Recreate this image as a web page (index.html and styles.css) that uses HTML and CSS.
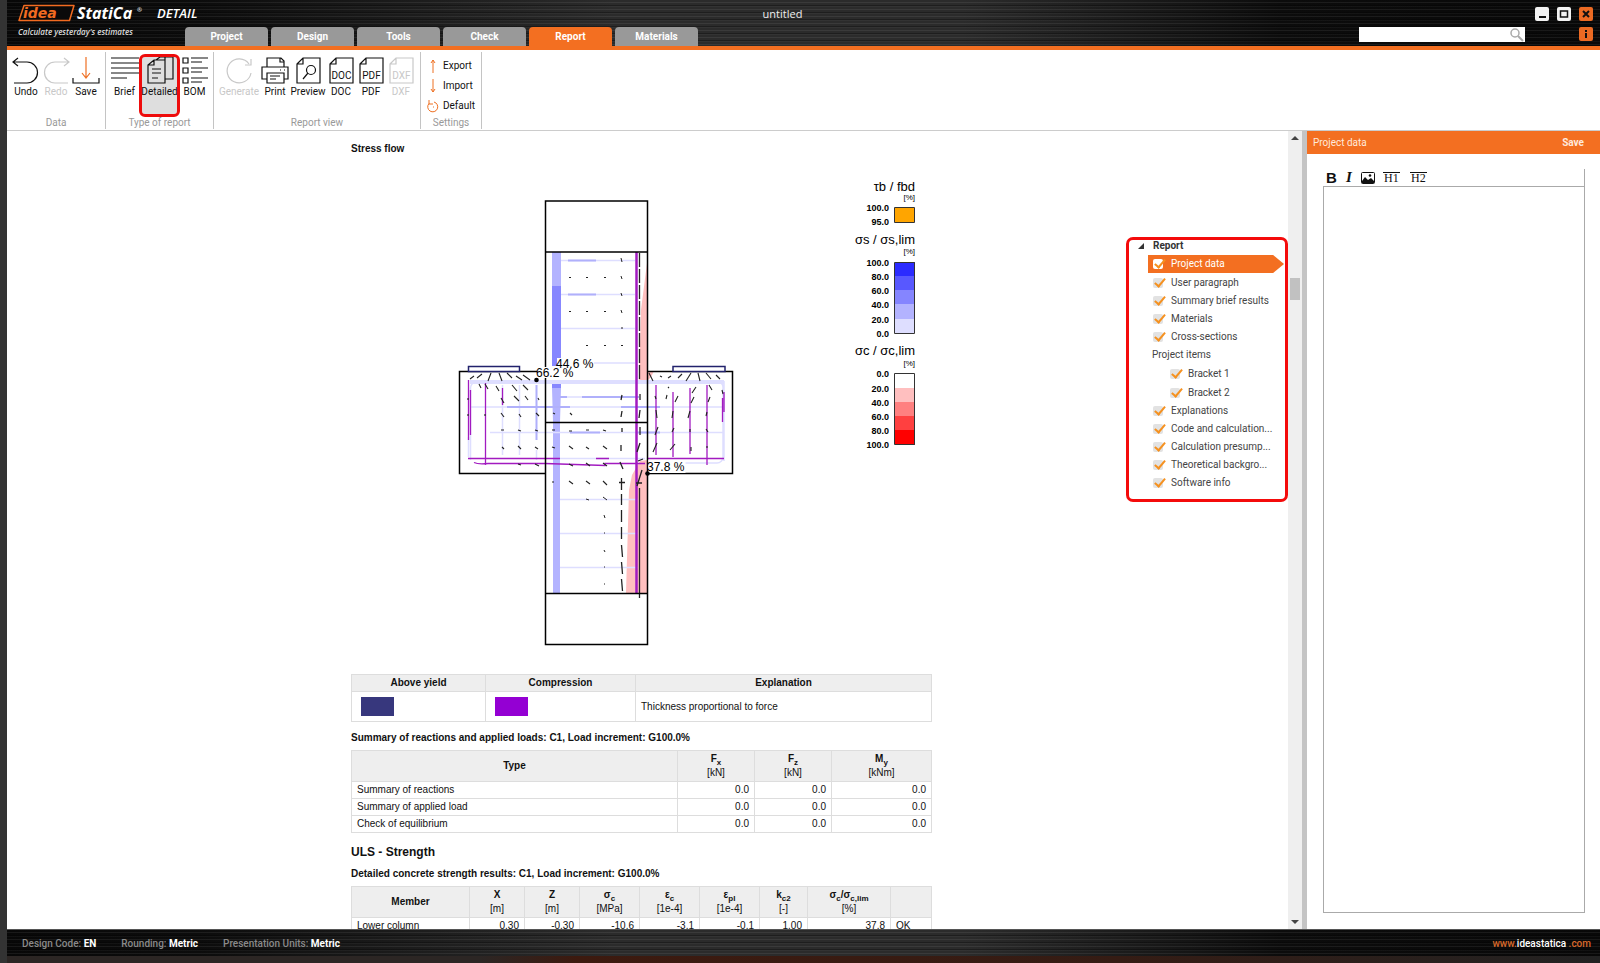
FILE: index.html
```html
<!DOCTYPE html>
<html lang="en">
<head>
<meta charset="utf-8">
<title>IDEA StatiCa Detail - untitled</title>
<link rel="stylesheet" href="styles.css">
</head>
<body>
<div class="app">
  <header class="top brushed">
    <div class="brand">
      <svg width="200" height="40" viewBox="7 0 200 40" role="img" aria-label="IDEA StatiCa DETAIL, Calculate yesterday's estimates">
        <path d="M24 5.500H74L69.500 20.500H19Z" fill="#0a0a0a" stroke="#f26b21" stroke-width="1.500" stroke-linejoin="round"/>
        <g font-style="italic" font-weight="bold">
          <text x="23" y="18" font-family="DejaVu Sans" font-size="14" fill="#f26b21">idea</text>
          <text x="77" y="19" font-family="Open Sans" font-size="16" fill="#fff">StatiCa</text>
          <text x="137" y="12" font-family="Open Sans" font-size="6" fill="#ddd">®</text>
          <text x="157" y="18" font-family="Open Sans" font-size="13" font-weight="600" fill="#fff">DETAIL</text>
          <text x="18" y="35" font-family="Open Sans" font-size="8" font-weight="600" fill="#ddd">Calculate yesterday's estimates</text>
        </g>
      </svg>
    </div>
    <div class="top-main">
      <div class="title">untitled</div>
      <nav class="tabs">
        <a href="#project">Project</a><a href="#design">Design</a><a href="#tools">Tools</a><a href="#check">Check</a><a href="#report" class="active">Report</a><a href="#materials">Materials</a>
      </nav>
    </div>
    <div class="tools">
      <div class="tool-row">
        <button class="win" aria-label="Minimize"><svg width="14" height="14"><path d="M4 10h7" stroke="#111" stroke-width="2"/></svg></button>
        <button class="win" aria-label="Maximize"><svg width="14" height="14"><path d="M3.500 4h7v6h-7z" fill="none" stroke="#111" stroke-width="1.500"/></svg></button>
        <button class="win orange" aria-label="Close"><svg width="14" height="14"><path d="M4 4l6 6M10 4l-6 6" stroke="#111" stroke-width="2"/></svg></button>
      </div>
      <div class="tool-row">
        <div class="search"><input type="text" aria-label="Search"><svg width="16" height="15" viewBox="0 0 16 15"><circle cx="6" cy="6" r="4" fill="none" stroke="#aaa" stroke-width="1.500"/><path d="M9 9l5 5" stroke="#aaa" stroke-width="2"/></svg></div>
        <button class="win orange" aria-label="Information"><svg width="14" height="14"><path d="M7 3v2M7 6v5" stroke="#111" stroke-width="2"/></svg></button>
      </div>
    </div>
  </header>

  <div class="ribbon">
    <section class="group">
      <div class="buttons">
        <button><svg class="ico" viewBox="0 0 28 28"><path d="M6 1L1 5l5 4M1 5h14a10.500 10.500 0 0 1 0 21H2"/></svg>Undo</button>
        <button disabled><svg class="ico" viewBox="0 0 28 28"><path d="M22 1l5 4-5 4M27 5H13a10.500 10.500 0 0 0 0 21h13"/></svg>Redo</button>
        <button><svg class="ico" viewBox="0 0 28 28"><path d="M1 21v5h26v-5"/><path class="o" d="M14 0v20M10 16l4 5 4-5"/></svg>Save</button>
      </div>
      <h2>Data</h2>
    </section>
    <section class="group type">
      <div class="buttons">
        <button><svg class="ico" viewBox="0 0 28 28"><path d="M0 1h28M0 6h28M0 11h28M0 16h28M0 21h16"/></svg>Brief</button>
        <button class="selected"><svg class="ico" viewBox="0 0 28 28"><path d="M2 8l6-5h11v23H2zM2 8h6V3M19 22h8V0H14l-4 3M19 8V0M6 12h9M6 16h9M6 21h6"/></svg>Detailed</button>
        <button><svg class="ico" viewBox="0 0 28 28"><path d="M2 1h5v5H2zM2 11h5v5H2zM2 21h5v5H2zM10 1h17M10 5h11M10 11h17M10 15h11M10 21h17M10 25h11"/></svg>BOM</button>
      </div>
      <h2>Type of report</h2>
    </section>
    <section class="group view">
      <div class="buttons">
        <button class="wide" disabled><svg class="ico" viewBox="0 0 28 28"><path d="M24 7A12 12 0 1 0 26 16M26 2v6h-6"/></svg>Generate</button>
        <button><svg class="ico" viewBox="0 0 28 28"><path d="M6 10V1h14l3 3v6M6 22H1V10h26v12h-4M6 16h17v10H6zM9 19h10M9 22h6M19 13h1M23 13h1M19 1v4h4"/></svg>Print</button>
        <button class="mid"><svg class="ico" viewBox="0 0 28 28"><path d="M3 7l6-6h17v25H3zM3 7h6V1"/><circle cx="17" cy="13" r="4.500"/><path d="M14 16l-5 6"/></svg>Preview</button>
        <button><svg class="ico" viewBox="0 0 28 28"><path d="M3 7l6-6h17v25H3zM3 7h6V1"/><text x="14.500" y="22">DOC</text></svg>DOC</button>
        <button><svg class="ico" viewBox="0 0 28 28"><path d="M3 7l6-6h17v25H3zM3 7h6V1"/><text x="14.500" y="22">PDF</text></svg>PDF</button>
        <button disabled><svg class="ico" viewBox="0 0 28 28"><path d="M3 7l6-6h17v25H3zM3 7h6V1"/><text x="14.500" y="22">DXF</text></svg>DXF</button>
      </div>
      <h2>Report view</h2>
    </section>
    <section class="group settings">
      <div class="list">
        <button><svg width="12" height="14"><path d="M6 14V1M4 4l2-3 2 3"/></svg>Export</button>
        <button><svg width="12" height="14"><path d="M6 0v13M4 10l2 3 2-3"/></svg>Import</button>
        <button><svg width="12" height="14"><path d="M2 4.500A5 5 0 1 0 7 3M2 1v4h4M6 8h1"/></svg>Default</button>
      </div>
      <h2>Settings</h2>
    </section>
  </div>

  <div class="work">
    <main class="doc">
      <article class="sheet">
        <h4 class="flow">Stress flow</h4>
        <svg class="figure" viewBox="351 156 581 518">
          <path fill="#ffbfbf" d="M647 263L641 310 639 380H647ZM648 371h6l-3 6-3 3zM647 460L640 461 632 475 629 490 626 593H647Z"/>
          <path fill="#b3b3ff" d="M552 252h9v35h-9zM552 388h9l-1 34v171h-7V422z"/>
          <path fill="#8787ff" d="M552 286h9v80h-9zM552 382h9v6h-9z"/>
          <g fill="none" stroke="#dedeff">
            <path stroke-width="1.500" d="M561 260.500h74M561 294.500h74M561 328.500h74M561 363h74M560 499.500h78M560 533.500h78M560 567.500h78M561 397h78M470 407h253M490 432.500h234M502.500 385v70M519.500 385v70M536.500 450v10M468.500 437v20M470.500 460V388a6 6 0 0 1 6-6M718 382a5 5 0 0 1 5 5v70a6 6 0 0 1-6 6h-70M724 381v80M560 458.500h85"/>
            <path stroke-width="4" d="M470 382h254"/>
          </g>
          <g fill="none" stroke="#b0b0fb" stroke-width="2">
            <path d="M568 260.500h28M568 294.500h28M582 397h57M507 407h63M560 397h7M621 407h39M636 432.500h24M536.500 385v55M570 432.500h30"/>
          </g>
          <g fill="none" stroke="#a21bc0">
            <path stroke-width="2.500" d="M636.500 252v341"/>
            <path stroke-width="1.300" d="M468.500 380v60M470.500 390v45M485.500 383v82M502.500 388v17M656 385v70M673 392v65M690 388v66M707 385v80M722.500 398v24M724 392v20M468 458.500h77M596 458.500h13M647 458.500h77M545 458.500h15M474 462.500q4 2 14 1h57l60 2v-2h40"/>
          </g>
          <g fill="none" stroke="#222" stroke-width="1.300">
            <path d="M639.500 253V380" stroke-dasharray="14 2"/>
            <path d="M639.500 488V598"/>
            <path d="M621.500 478v12M621.500 494v11M621.500 510v12M621.500 527v12M621.500 545l1 12M621.500 562l1 12M621.500 579l1 12M619 482.500h6M620 462l3 7M621 445v6M636 483h6M642 470l-5 16M640 443l-3 9M640 427v8M638 461l5-2M640 394v6M640 410l-1 8M622 395l-1 5M622 411l-1 6M622 428v4"/>
            <path stroke-width="1" d="M569 277.500h2M586 277.500h2M604 277.500h2M621 276l1 3M569 311.500h2M586 311.500h2M604 311.500h2M621 310l1 3M586 345.500h2M604 345.500h2M621 345.500h2M621 258l1 4M621 293l1 3M621 328h2M604 515l1 3M604 533h1M604 550l1 2M604 567h1M604 584h1M586 499l3 1M603 497l4 3"/>
            <path stroke-width="1.100" d="M569 446l4 3M586 447l3 2M603 446l4 3M552 447l3 1M535 447l3 2M518 446l3 3M502 447l2 2M501 430h3M518 430l3 1M535 430l3 1M552 430h3M569 431h3M586 430h3M603 430l3 1M569 481l4 3M586 481l4 3M603 481l4 4M569 464l4 2M586 463l4 3M603 463l4 3M535 464l4 2M518 464l3 1M552 482h2M570 413l2 2"/>
            <path stroke-width="1.100" d="M474 376l-4 3M482 374l-5 4M491 373l-3 8M499 373l3 8M507 373l5 5M516 376l6 4M523 375l7 5M479 384l2 4M485 384l3 5M496 386l3 5M512 385l5 6M523 385l5 5M501 398l3 5M514 396l5 5M525 396l3 4M538 398l1 2M501 413l3 4M519 414l2 3M536 413l3 3M468 398v2M468 414v2M485 414v2M553 413l2 1"/>
            <path stroke-width="1.100" d="M649 373l4 8M660 376l2 1M671 376l-3 2M682 374l-4 4M691 373l-5 8M698 373l2 8M706 373l5 6M716 375l4 4M667 395l-1 4M669 387l-1 1M678 396l-3 6M696 387l-4 6M709 385l3 5M694 397l-3 6M710 397l-2 5M722 390l1 4M655 396l1 3M656 410l1 8M673 411l-1 7M690 411l-2 7M707 412l-1 4M658 427l-3 8M674 428l-2 4M690 429v3M706 429l2 3M657 443l-4 9M675 444l-5 6M691 447v4M707 446v2"/>
          </g>
          <path fill="none" stroke="#000" stroke-width="1.500" d="M545.500 201h102v443.500h-102zM545.500 252h102M545.500 422.500h102M545.500 593.500h102M545.500 371.500h-86v102h86M647.500 371.500h85v102h-85"/>
          <path fill="#fff" stroke="#22226c" stroke-width="1.500" d="M468.500 366.500h51v5h-51zM673 366.500h52v5h-52z"/>
          <path fill="#fff" d="M557 358h37v14h-37zM537 367h36v11h-36zM648.500 460h37v13h-37z"/>
          <g font-size="12">
            <text x="556" y="368">44.6 %</text>
            <path fill="#fff" d="M538 369h36v9h-36z"/>
            <text x="536" y="377">66.2 %</text>
            <text x="647" y="471">37.8 %</text>
          </g>
          <circle cx="536.500" cy="380" r="2.300"/><circle cx="647.500" cy="473.500" r="2.300"/>
          <g text-anchor="end" font-size="13">
            <text x="915" y="191">τb / fbd</text><text x="915" y="244">σs / σs,lim</text><text x="915" y="355">σc / σc,lim</text>
            <g font-size="8"><text x="915" y="200">[%]</text><text x="915" y="254">[%]</text><text x="915" y="366">[%]</text></g>
            <g font-size="9" font-weight="bold">
              <text x="889" y="211">100.0</text><text x="889" y="225">95.0</text>
              <text x="889" y="266">100.0</text><text x="889" y="280">80.0</text><text x="889" y="294">60.0</text><text x="889" y="308">40.0</text><text x="889" y="323">20.0</text><text x="889" y="337">0.0</text>
              <text x="889" y="377">0.0</text><text x="889" y="392">20.0</text><text x="889" y="406">40.0</text><text x="889" y="420">60.0</text><text x="889" y="434">80.0</text><text x="889" y="448">100.0</text>
            </g>
          </g>
          <g>
            <path fill="#ffa500" d="M895 208h20v14h-20z"/>
            <path fill="#2b2bff" d="M895 262h20v15h-20z"/><path fill="#5858ff" d="M895 276h20v15h-20z"/><path fill="#8585ff" d="M895 290h20v15h-20z"/><path fill="#b3b3ff" d="M895 304h20v15h-20z"/><path fill="#dedeff" d="M895 319h20v14h-20z"/>
            <path fill="#ffbfbf" d="M895 388h20v15h-20z"/><path fill="#ff8080" d="M895 402h20v15h-20z"/><path fill="#ff4040" d="M895 416h20v15h-20z"/><path fill="#f00" d="M895 430h20v15h-20z"/>
            <path fill="none" stroke="#333" d="M894.500 207.500h20v15h-20zM894.500 262.500h20v71h-20zM894.500 373.500h20v71h-20z"/>
          </g>
        </svg>
        <table>
          <colgroup><col class="w134"><col class="w150"><col></colgroup>
          <tr><th>Above yield</th><th>Compression</th><th>Explanation</th></tr>
          <tr class="swatches"><td><span class="swatch navy"></span></td><td><span class="swatch violet"></span></td><td>Thickness proportional to force</td></tr>
        </table>
        <h4>Summary of reactions and applied loads: C1, Load increment: G100.0%</h4>
        <table>
          <colgroup><col><col class="w77"><col class="w77"><col class="w100"></colgroup>
          <tr><th>Type</th><th>F<sub>x</sub><br><span>[kN]</span></th><th>F<sub>z</sub><br><span>[kN]</span></th><th>M<sub>y</sub><br><span>[kNm]</span></th></tr>
          <tr><td>Summary of reactions</td><td class="n">0.0</td><td class="n">0.0</td><td class="n">0.0</td></tr>
          <tr><td>Summary of applied load</td><td class="n">0.0</td><td class="n">0.0</td><td class="n">0.0</td></tr>
          <tr><td>Check of equilibrium</td><td class="n">0.0</td><td class="n">0.0</td><td class="n">0.0</td></tr>
        </table>
        <h3>ULS - Strength</h3>
        <h4 class="after">Detailed concrete strength results: C1, Load increment: G100.0%</h4>
        <table>
          <colgroup><col><col class="w55"><col class="w55"><col class="w60"><col class="w60"><col class="w60"><col class="w48"><col class="w83"><col class="w41"></colgroup>
          <tr><th>Member</th><th>X<br><span>[m]</span></th><th>Z<br><span>[m]</span></th><th>σ<sub>c</sub><br><span>[MPa]</span></th><th>ε<sub>c</sub><br><span>[1e-4]</span></th><th>ε<sub>pl</sub><br><span>[1e-4]</span></th><th>k<sub>c2</sub><br><span>[-]</span></th><th>σ<sub>c</sub>/σ<sub>c,lim</sub><br><span>[%]</span></th><th></th></tr>
          <tr><td>Lower column</td><td class="n">0.30</td><td class="n">-0.30</td><td class="n">-10.6</td><td class="n">-3.1</td><td class="n">-0.1</td><td class="n">1.00</td><td class="n">37.8</td><td>OK</td></tr>
        </table>
      </article>
      <aside class="tree">
        <div class="root"><svg width="6" height="6"><path d="M6 0v6H0z" fill="#333"/></svg>Report</div>
        <label class="current"><input type="checkbox" checked>Project data</label>
        <label><input type="checkbox" checked>User paragraph</label>
        <label><input type="checkbox" checked>Summary brief results</label>
        <label><input type="checkbox" checked>Materials</label>
        <label><input type="checkbox" checked>Cross-sections</label>
        <div class="items">Project items</div>
        <label class="sub"><input type="checkbox" checked>Bracket 1</label>
        <label class="sub"><input type="checkbox" checked>Bracket 2</label>
        <label><input type="checkbox" checked>Explanations</label>
        <label><input type="checkbox" checked>Code and calculation...</label>
        <label><input type="checkbox" checked>Calculation presump...</label>
        <label><input type="checkbox" checked>Theoretical backgro...</label>
        <label><input type="checkbox" checked>Software info</label>
      </aside>
    </main>
    <div class="scroll">
      <svg width="8" height="4"><path d="M0 4l4-4 4 4z" fill="#444"/></svg>
      <div class="track"><div class="thumb"></div></div>
      <svg width="8" height="4"><path d="M0 0h8L4 4z" fill="#444"/></svg>
    </div>
    <section class="panel">
      <div class="panel-head"><span>Project data</span><button>Save</button></div>
      <div class="editor">
        <div class="format">
          <button class="b">B</button>
          <button class="i">I</button>
          <button aria-label="Insert image"><svg width="14" height="12"><rect x="0.500" y="0.500" width="13" height="11" rx="1" fill="#fff" stroke="#111"/><path d="M1 9l3-4 3 3 3-2 3 3v2H1z" fill="#111"/><circle cx="9" cy="3.500" r="1.300" fill="#111"/></svg></button>
          <button class="h">H1</button>
          <button class="h last">H2</button>
        </div>
        <textarea aria-label="Project data text"></textarea>
      </div>
    </section>
  </div>

  <footer class="status brushed">
    <span>Design Code: <b>EN</b></span>
    <span>Rounding: <b>Metric</b></span>
    <span>Presentation Units: <b>Metric</b></span>
    <a href="#site">www.<em>ideastatica</em> .com</a>
  </footer>
</div>
</body>
</html>
```

FILE: styles.css
```css
* { box-sizing: border-box; }
body {
  margin: 0;
  padding: 0 0 7px 7px;
  height: 100vh;
  background: linear-gradient(#333, #333) left / 7px 100% no-repeat,
    linear-gradient(90deg, #2c2624, #2c2624 30%, #3d1a0f 36%, #351c14 70%, #222 100%);
  font: 11px/14px Roboto, "Open Sans", sans-serif;
  color: #222;
  overflow: hidden;
}
button { border: 0; padding: 0; background: none; font: inherit; color: inherit; }
a { text-decoration: none; }
h2, h3, h4 { margin: 0; }

.app { height: 100%; display: flex; flex-direction: column; background: #fff; }
.brushed {
  background:
    repeating-linear-gradient(transparent 0 2px, rgba(255,255,255,.07) 2px 3px, transparent 3px 5px, rgba(0,0,0,.3) 5px 6px, rgba(255,255,255,.04) 6px 7px),
    linear-gradient(90deg, #080808, #0c0c0c 12%, #2b2b2b 38%, #2b2b2b 60%, #0c0c0c 80%, #080808);
}
.top { flex: none; height: 50px; display: flex; border-bottom: 4px solid #f36f21; }
.brand { width: 178px; }
.brand svg { display: block; }
.top-main { flex: 1; display: flex; flex-direction: column; justify-content: space-between; }
.title { padding: 6px 0 0 21px; text-align: center; font: 11px/15px "Open Sans", sans-serif; color: #eee; }
.tabs { display: flex; gap: 3px; }
.tabs a {
  width: 83px; height: 19px; border-radius: 4px 4px 0 0; background: #999;
  color: #fff; text-align: center; font-weight: 700; font-size: 10px; line-height: 20px;
}
.tabs .active { background: #f36f21; }
.tools { width: 241px; padding: 7px 7px 0 0; display: flex; flex-direction: column; gap: 6px; }
.tool-row { display: flex; justify-content: flex-end; gap: 8px; }
.win { width: 14px; height: 14px; border-radius: 2px; background: #f2f2f2; }
.win svg { display: block; }
.orange { background: #ec6a23; }
.search { display: flex; flex: none; width: 166px; margin-right: 46px; background: #fff; }
.search input { flex: 1; min-width: 0; height: 15px; border: 0; padding: 0 4px; background: none; outline: 0; }

.ribbon { flex: none; height: 81px; display: flex; border-bottom: 1px solid #ccc; }
.group {
  margin-top: 2px; height: 77px; padding: 0 4px; border-right: 1px solid #c4c4c4;
  display: flex; flex-direction: column; justify-content: space-between;
}
.group h2 { font-weight: 400; font-size: 10px; line-height: 12px; color: #999; text-align: center; }
.buttons { display: flex; padding-top: 5px; }
.buttons button {
  width: 30px; height: 57px; display: flex; flex-direction: column; align-items: center;
  font-size: 10px; line-height: 14px; color: #111; white-space: nowrap;
}
.buttons .wide { width: 42px; }
.buttons .mid { width: 36px; }
.buttons button:disabled { color: #c8c8c8; }
.type { padding: 0 1px; }
.type .buttons button { width: 35px; }
.type .buttons .selected { background: #dedede; outline: 3px solid #ee0c0c; border-radius: 3px; z-index: 1; }
.ico { width: 28px; height: 28px; flex: none; fill: none; stroke: currentColor; stroke-width: 1.2; }
.ico .o { stroke: #ee7023; }
.ico text { fill: currentColor; stroke: none; text-anchor: middle; font: 10px Roboto, sans-serif; }
.settings { padding: 0 4px; width: 61px; }
.list { display: flex; flex-direction: column; gap: 6px; padding: 7px 0 0 2px; }
.list button { display: flex; align-items: center; gap: 4px; font-size: 10px; line-height: 14px; color: #111; }
.list svg { fill: none; stroke: #ee7023; }

.work { flex: 1; min-height: 0; display: flex; }
.doc { flex: 1; min-width: 0; display: grid; grid-template-columns: 1fr 581px 1fr; padding-right: 12px; overflow: hidden; }
.sheet { grid-column: 2; padding-top: 11px; font-family: "Liberation Sans", sans-serif; font-size: 10px; color: #111; }
.figure { display: block; width: 100%; font-family: "Liberation Sans", sans-serif; }
.sheet h4 { font-size: 10px; line-height: 14px; padding: 9px 0 5px; }
.sheet .flow { padding: 0; }
.sheet h3 { font-size: 12px; line-height: 16px; padding-top: 11px; }
.sheet .after { padding: 7px 0 5px; }
table { width: 100%; table-layout: fixed; border-collapse: collapse; }
th, td { border: 1px solid #ddd; padding: 1px 5px; line-height: 14px; text-align: left; white-space: nowrap; }
th { background: #eee; text-align: center; }
th span { font-weight: 400; }
.n { text-align: right; }
sub { font-size: 8px; line-height: 0; }
.w134 { width: 134px; } .w150 { width: 150px; } .w77 { width: 77px; } .w100 { width: 100px; }
.w55 { width: 55px; } .w60 { width: 60px; } .w48 { width: 48px; } .w83 { width: 83px; } .w41 { width: 41px; }
.swatches td { padding: 5px; }
.swatch { display: block; width: 33px; height: 19px; margin-left: 4px; }
.navy { background: #37377d; }
.violet { background: #9400d3; }

.tree {
  grid-column: 3; justify-self: end; align-self: start; width: 162px; height: 265px;
  margin: 106px -12px 0 0; border: 3px solid #f40b0b; border-radius: 7px;
  font-size: 10px; line-height: 18px; color: #444;
}
.tree label, .items { display: flex; align-items: center; gap: 8px; height: 18px; padding-left: 5px; margin-left: 19px; white-space: nowrap; }
.root { display: flex; align-items: center; gap: 9px; height: 12px; padding-left: 9px; margin-bottom: 3px; line-height: 12px; font-weight: 700; color: #333; }
.tree .current {
  width: 136px; background: #f36f21; color: #fff; margin-bottom: 1px;
  clip-path: polygon(0 0, 92% 0, 100% 50%, 92% 100%, 0 100%);
}
.tree .sub { margin-left: 36px; height: 19px; }
.tree .items { height: 17px; margin-bottom: 1px; padding-left: 4px; }
.tree input { appearance: none; position: relative; flex: none; width: 10px; height: 10px; margin: 0; border-radius: 2px; background: #e2e2e2; }
.tree input::before {
  content: ""; position: absolute; left: 4px; top: -2px; width: 4px; height: 9px;
  border: solid #f59120; border-width: 0 2px 2px 0; transform: rotate(40deg);
}
.tree .current input { background: #fff; }

.scroll { width: 14px; background: #efefef; display: flex; flex-direction: column; align-items: center; padding: 5px 0; }
.track { flex: 1; width: 10px; padding-top: 138px; }
.thumb { height: 22px; background: #c1c1c1; }
.panel { width: 298px; border-left: 5px solid #c4c4c4; display: flex; flex-direction: column; }
.panel-head {
  display: flex; justify-content: space-between; align-items: center; height: 23px;
  padding: 0 16px 0 6px; background: #f36f21; color: #ffe9dc; font-size: 10px;
}
.panel-head button { font-weight: 700; }
.editor { flex: 1; display: flex; flex-direction: column; padding: 15px 15px 16px 16px; }
.format { display: flex; align-items: center; gap: 8px; height: 17px; padding-left: 3px; border-right: 1px solid #aaa; color: #111; }
.format svg { display: block; }
.b { font: 700 15px "Liberation Sans", sans-serif; }
.i { font: italic 700 15px "Liberation Serif", serif; width: 8px; }
.format .h { border-top: 1px solid #111; width: 17px; font: 12px/11px "Liberation Serif", serif; }
.format .last { margin-left: 2px; }
textarea { flex: 1; width: 100%; border: 1px solid #aaa; resize: none; outline: 0; }

.status {
  flex: none; height: 27px; display: flex; align-items: center; gap: 25px; padding: 2px 9px 0 15px;
  border-top: 1px solid #555; color: #8a8a8a; font-size: 10px; font-weight: 500;
}
.status b { color: #fff; }
.status a { margin-left: auto; color: #d8692b; }
.status em { font-style: normal; color: #fff; }
```
